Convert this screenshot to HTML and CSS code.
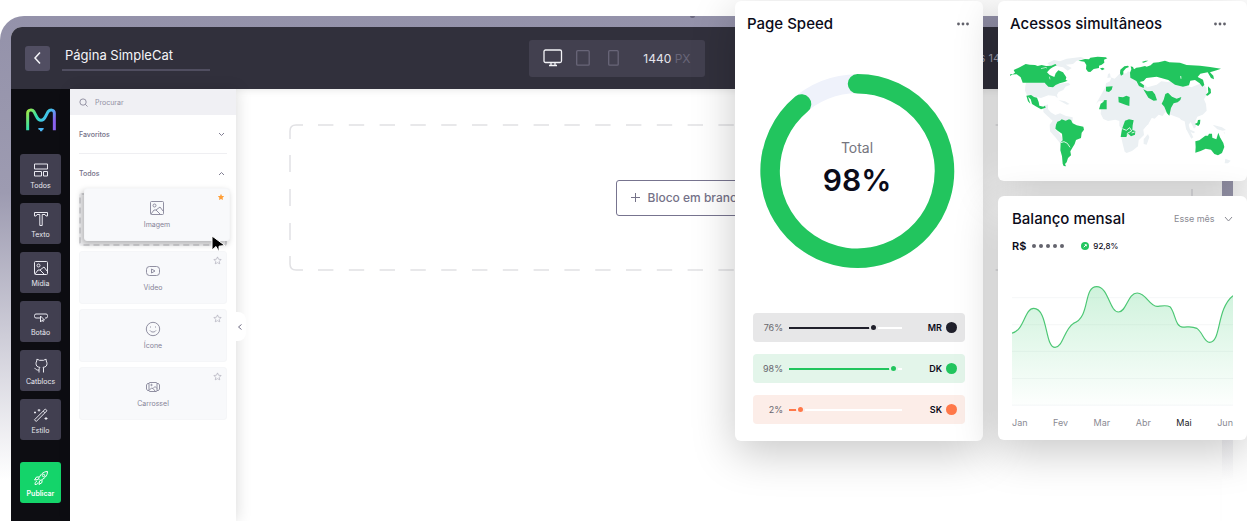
FILE: index.html
```html
<!DOCTYPE html>
<html lang="pt-BR">
<head>
<meta charset="utf-8">
<title>Página SimpleCat</title>
<link rel="stylesheet" href="styles.css">
</head>
<body>
<main class="stage">
  <div class="device">
    <span class="camera"></span>
    <div class="screen">
      <header class="topbar">
        <div class="page-name">
          <button class="back" aria-label="Voltar"><svg width="10" height="14" viewBox="0 0 10 14"><path d="M7 1.500 2 7l5 5.500"/></svg></button>
          <input class="title-input" aria-label="Nome da página" value="Página SimpleCat">
        </div>
        <div class="viewport">
          <button class="mode mode-on" aria-label="Desktop"><svg width="20" height="18" viewBox="0 0 20 18"><rect x="1" y="1" width="17.500" height="12.500" rx="1.500"/><path d="M8 13.500v3M12 13.500v3M6 16.500h8"/></svg></button>
          <button class="mode" aria-label="Tablet"><svg width="14" height="16" viewBox="0 0 14 16"><rect x=".7" y=".7" width="12.500" height="14.500" rx="1"/></svg></button>
          <button class="mode" aria-label="Celular"><svg width="11" height="16" viewBox="0 0 11 16"><rect x=".7" y=".7" width="9.500" height="14.500" rx="1"/></svg></button>
          <span class="px-size">1440 <span class="unit">PX</span></span>
        </div>
        <span class="saved">às 14</span>
      </header>
      <div class="workspace">
        <nav class="rail">
          <svg class="logo" width="32" height="24" viewBox="0 0 96 72">
            <defs><linearGradient id="brand" x1="0" y1="0" x2="1" y2=".5"><stop offset="0" stop-color="#a0ea48"/><stop offset=".4" stop-color="#2fe0b0"/><stop offset=".7" stop-color="#45bff0"/><stop offset="1" stop-color="#8a62ee"/></linearGradient></defs>
            <path d="M8 67V16C8 4 22 4 27 11C35 24 36 37 48 37S61 24 69 11C75 4 88 4 88 16V67" fill="none" stroke="url(#brand)" stroke-width="9"/>
            <path d="M40 60h16v3q-1 3-4 3v4h-7v-4q-5 0-5-3z" fill="#4bb5f3"/>
          </svg>
          <div class="tools">
            <button class="tool"><svg viewBox="0 0 16 16"><path d="M1.500 2h13v5h-13zM1.500 9.500h7V14h-7zM10.500 9.500h4V14h-4z"/></svg>Todos</button>
            <button class="tool"><svg viewBox="0 0 16 16"><path d="M1.500 1.500h13v3.500h-1.500L12 3.500H9.200v11H6.800v-11H4L3 5H1.500z"/></svg>Texto</button>
            <button class="tool"><svg viewBox="0 0 16 16"><rect x="1.500" y="1.500" width="13" height="13" rx="1"/><circle cx="5.500" cy="5.500" r="1.500"/><path d="m2 14 3-4h2l4-3 3 4M7 10l4 4"/></svg>Mídia</button>
            <button class="tool"><svg viewBox="0 0 16 16"><path d="M7 9H3Q1.500 9 1.500 7.500v-1Q1.500 5 3 5h10q1.500 0 1.500 1.500v1Q14.500 9 13 9h-1M7.500 7l4 4H9.500l.8 2M7.500 7v6l2-2"/></svg>Botão</button>
            <button class="tool"><svg viewBox="0 0 16 16"><path d="M6 14.500V12c-3 .7-3-1.500-4.500-1.700M10.500 14.500V11c0-1 0-1.200-.5-1.600 3-.3 4-1.700 4-4 0-1-.4-1.700-.8-2.400V1.300c-1 0-1.700.4-2.500 1H6.300c-.8-.6-1.500-1-2.500-1V3C3.300 3.700 3 4.400 3 5.400c0 2.300 1 3.700 4 4-.6.5-.8 1-1 2.600"/></svg>Catblocs</button>
            <button class="tool"><svg viewBox="0 0 16 16"><path d="M1.500 12.800 12.300 2l1.700 1.700L3.200 14.500zM10.200 4.100l1.700 1.700M6 2v2.500M4.700 3.200h2.600M2 4.500v2M1 5.500h2M13 10v3M11.500 11.500h3"/></svg>Estilo</button>
          </div>
          <button class="tool publish"><svg viewBox="0 0 16 16"><path d="M5.500 9C7 5 10 1.500 14.500 1.500 14.500 6 11 9 7 10.500zM6 7H3.500L1.500 10l3.500-.5M9 10v2.500l-3 2 .5-3.700M4 11c-1.500.5-2 2-2 3.500 1.500 0 3-.5 3-2"/><circle cx="10.500" cy="5.500" r="1.200"/></svg>Publicar</button>
        </nav>
        <aside class="panel">
          <label class="search"><svg width="9" height="9" viewBox="0 0 10 10"><circle cx="4.500" cy="4.500" r="3.500"/><path d="m7 7 2.500 2.500"/></svg><input type="search" placeholder="Procurar" aria-label="Procurar"></label>
          <button class="section section-line">Favoritos<svg width="7" height="5" viewBox="0 0 7 5"><path d="m1 1 2.500 2.500L6 1"/></svg></button>
          <button class="section">Todos<svg width="7" height="5" viewBox="0 0 7 5"><path d="M1 4 3.500 1.500 6 4"/></svg></button>
          <div class="tiles">
            <div class="slot">
              <button class="tile lifted"><svg class="star star-on" viewBox="0 0 10 10"><path d="m5 1 1.200 2.600 2.800.3L7 5.900l.5 2.800L5 7.400 2.500 8.700 3 5.900l-2-2 2.800-.3z"/></svg><svg class="glyph" viewBox="0 0 16 16"><rect x="1.500" y="1.500" width="13" height="13" rx="1"/><circle cx="5.500" cy="5.500" r="1.500"/><path d="m2 14 3-4h2l4-3 3 4M7 10l4 4"/></svg>Imagem</button>
              <svg class="pointer" width="17" height="20" viewBox="0 0 17 20"><path d="M2 2v14l4-3.500L9 18l0-5.800 6-.7z"/></svg>
            </div>
            <button class="tile"><svg class="star" viewBox="0 0 10 10"><path d="m5 1 1.200 2.600 2.800.3L7 5.900l.5 2.800L5 7.400 2.500 8.700 3 5.900l-2-2 2.800-.3z"/></svg><svg class="glyph" viewBox="0 0 16 16"><rect x="1.500" y="3.500" width="13" height="9" rx="3"/><path d="m6.500 6 3.500 2-3.500 2z"/></svg>Vídeo</button>
            <button class="tile"><svg class="star" viewBox="0 0 10 10"><path d="m5 1 1.200 2.600 2.800.3L7 5.900l.5 2.800L5 7.400 2.500 8.700 3 5.900l-2-2 2.800-.3z"/></svg><svg class="glyph" viewBox="0 0 16 16"><circle cx="8" cy="8" r="6.700"/><path d="M5 9.500c1.500 2 4.500 2 6 0M5.500 5.500v1M10.500 5.500v1"/></svg>Ícone</button>
            <button class="tile"><svg class="star" viewBox="0 0 10 10"><path d="m5 1 1.200 2.600 2.800.3L7 5.900l.5 2.800L5 7.400 2.500 8.700 3 5.900l-2-2 2.800-.3z"/></svg><svg class="glyph" viewBox="0 0 16 16"><rect x="4" y="3.500" width="8" height="9" rx="1"/><path d="M4 4.500H2.500L1.500 6v4l1 1.500H4M12 4.500h1.500l1 1.500v4l-1 1.500H12M4.500 11l2-2 1.500.5L10 7.500l2 2M8 9.500l2.500 3"/><circle cx="6.500" cy="6" r=".7"/></svg>Carrossel</button>
          </div>
          <button class="collapse" aria-label="Recolher painel"><svg width="6" height="8" viewBox="0 0 6 8"><path d="M4.500 1.500 1.500 4l3 2.500"/></svg></button>
        </aside>
        <section class="canvas">
          <div class="dropzone">
            <svg class="dashes">
              <line class="dash-h" x1="29" y1="1" x2="97%" y2="1"/>
              <line class="dash-h dash-bottom" x1="29" y1="1" x2="97%" y2="1"/>
              <line class="dash-v" x1="1" y1="31" x2="1" y2="119"/>
              <line class="dash-v dash-right" x1="0" y1="31" x2="0" y2="119"/>
              <path d="M14 1H7Q1 1 1 7v8M1 132v8q0 6 6 6h7"/>
            </svg>
            <button class="blank"><svg width="9" height="9" viewBox="0 0 9 9"><path d="M4.500 0v9M0 4.500h9"/></svg>Bloco em branco</button>
          </div>
        </section>
      </div>
    </div>
  </div>

  <div class="cards">
    <article class="card speed">
      <header class="card-head"><h2>Page Speed</h2><button class="more" aria-label="Mais"><svg width="12" height="4" viewBox="0 0 12 4"><circle cx="1.500" cy="2" r="1.400"/><circle cx="6" cy="2" r="1.400"/><circle cx="10.500" cy="2" r="1.400"/></svg></button></header>
      <div class="gauge">
        <svg viewBox="0 0 196 196"><circle cx="98" cy="98" r="87.200" fill="none" stroke="#eff2fb" stroke-width="19"/><path d="M98.500 10.800A87.200 87.200 0 1 1 42.500 31" fill="none" stroke="#22c55e" stroke-width="19.500" stroke-linecap="round"/></svg>
        <div class="gauge-text"><span class="gauge-label">Total</span><strong>98%</strong></div>
      </div>
      <ul class="stats">
        <li class="stat dark"><label for="mr">76%</label><input id="mr" type="range" value="77" style="--v:76%"><b>MR</b><i></i></li>
        <li class="stat green"><label for="dk">98%</label><input id="dk" type="range" value="96" style="--v:94%"><b>DK</b><i></i></li>
        <li class="stat orange"><label for="sk">2%</label><input id="sk" type="range" value="7" style="--v:7%"><b>SK</b><i></i></li>
      </ul>
    </article>
    <div class="side">
      <article class="card access">
        <header class="card-head"><h2>Acessos simultâneos</h2><button class="more" aria-label="Mais"><svg width="12" height="4" viewBox="0 0 12 4"><circle cx="1.500" cy="2" r="1.400"/><circle cx="6" cy="2" r="1.400"/><circle cx="10.500" cy="2" r="1.400"/></svg></button></header>
        <svg class="map" viewBox="60 165 669 341">
          <g fill="#ebf0f3">
            <path d="M110 243h75l14 10 36-5 6 6-15 6-6 10-14 6-5 8 2 11-8-7-20-2-22 8-20-4-22-4-6-14 1-15zM172 190l20-10 18 4 20-8 42-5 12 4-25 8-10 9-22 2 18 10-12 8-14-10-22-4-16 0zM160 318l14-5 0 14 8 10 14 8 14-5 18 8 20 4 0 12-24 2-22 10-8 10 14 14 10 16 4 16-8 2-18-22-16-18-1-20 9-12-22-20-6-6zM205 300l20 4 14 8-8 2zM238 425l12 12-8 10-10-8z"/>
            <path d="M346 262l2-12 12-6 4-12-12 2 2-12 6-2 2 12 12 4 14-14 22-2 4-6 10 4 12 12 4 20 24 4 8 8 28-8 14-10 18 2 24-4 20 12 28 8 24-10 14 4 8 8 0 20-8 14 6 14 2 20-12 12-16 6-6 14 2 16-6 6-10-20-6 8 6 22 8 16-6 4-16-30-4-22-10-4-6-6-26-10-16-8-8 12-12-4-12 12-20-6-20-16-12 0 4 10 12 16 16 4 2 8-22 16-12 4-24-40-6-22-12-2-4 8-8-4 2-12-14-2-10-12-10 0 2 12-12-14-20 0-8 8z"/>
            <path d="M346 276l38-4 6 12 22 2 6 4 22 2 10 14 12 24 10 10 20 1-14 26-18 22 2 16-16 16-2 18-18 14-16 6-6-4-6-24-6-26 4-16-8-12 0-14-12-4-22 4-14-6-8-16 2-26zM474 402l4 10-8 22-9-2 0-14zM590 384l26 12-6 4-20-10zM668 374l28 8 12 8-10 2-16-4zM706 476l16 6-8 8-10 0zM700 395l6 4-2 2z"/>
          </g>
          <g fill="#22c55e">
            <path d="M61 227l14-9-4-8 18-8 18-10 12 2 16 1 8 3 12-3 13 3 16-1 12-5 4 4-12 6-8 5-9 10 8 8 14 6 4-11 8-9 14 6 10 15-2 8 6 2-10 4-14 4-12 5-8 7-14-2-8-8-3-4h-66l-6-16-12-9-14-1-14 4z"/>
            <path d="M265 182l20-5 12 1 4-5 22-3 24 2 5 3-10 4 1 9-8 6-8 3 0 7-16 3-10 9-7-1-6-8 1-12-6-10zM330 205l9-2 5 4-8 4z"/>
            <path d="M109 287l14-2 9 6 9 2 5 13 2 11 12 3 5-3 2 6-14 5-16-9-11-7-4-14-8-8 7 21-7-7z"/>
            <path d="M202 365l8-3 5-4 12 4 10-4 6 2 5 10 12 6 20 4 2 9-7 9-2 16-15 6-4 12-5 8-8 14 2 12-9 8-4 13-5 5 3 7-7-1-3-7-2-22-5-18 1-24 6-6-2-20-12-8-8-7 2-12z"/>
            <path d="M420 218l4-10-2-9 7 2 3 7 7-5 11-1 15-4 5 2 12-4 8-8 16-1 19-5 13 5 32 1 20 7 40 2 30 4 33 5-13 5-20 6 10 10 2 11-9-4-10-17-22 4-8 10 16 8 4 16-6 5-8-10-14-10-14 2-4 14-18 4-24-6-20-14-35-10-31 4-8 9-12 3 13 10-1 8-14-6-8-15-18-10z"/>
            <path d="M390 220l1-11 12-10 11-2 3 4-9 4-8 9 0 9-7 4zM455 186l12-4 8 0-14 6z"/>
            <path d="M348 260l20-1-3 10-8 7-9-2zM332 311l8-5 2-5 8-1 0 28-23 0zM385 290l14 2 10-5 10 4-1 27-10-3-22-8zM405 362l12-4 14 3-3 15-1 14 9 3-1 11-12 5-8-8-6 10-17 0 4-24zM460 268l12 6 15-1 8 10 6 18-10 1-16-9zM526 282l8-4 12 12 14 6 14-5-3 9-8 7-12 3-8 14-5 23-7-7-8-20-8-9 6-12zM614 372l8-4 2-8 7-1-1 12-5 7zM654 259l8 8 1 12-10 8-6-2 8-8-1-9z"/>
            <path d="M616 424l12-3 18-14 8 0 3-6 9 0 1 12 12 5 6-20 5 14 10 17 3 12-7 18-12 7-11-4-10-13-16-3-15 7-16 5 1-17z"/>
          </g>
          <path d="M212 428l10-3 10 5 8 12M397 386l12 5 10-8 6 10-13 7 0 12M425 399l9-3M572 228l1 8" fill="none" stroke="#fff" stroke-width="2.500"/>
          <path d="M153 206l12-3M178 230l2 8M165 202l6 2" fill="none" stroke="#c5efd4" stroke-width="2.500"/>
        </svg>
      </article>
      <article class="card balance">
        <header class="card-head"><h2>Balanço mensal</h2><label class="period"><select aria-label="Período"><option>Esse mês</option></select><svg width="9" height="6" viewBox="0 0 9 6"><path d="m1 1 3.500 4L8 1"/></svg></label></header>
        <div class="amount"><b>R$</b><span class="mask"><i></i><i></i><i></i><i></i><i></i></span><svg width="8" height="8" viewBox="0 0 8 8"><circle cx="4" cy="4" r="4" fill="#22c55e"/><path d="M2.700 5.300 5.200 2.800M3.700 2.700h1.600v1.600" fill="none" stroke="#fff"/></svg><span>92,8%</span></div>
        <svg class="chart" viewBox="68 308 662 366">
          <defs><linearGradient id="area" x1="0" y1="0" x2="0" y2="1"><stop offset="0" stop-color="#22c55e" stop-opacity=".22"/><stop offset="1" stop-color="#22c55e" stop-opacity=".01"/></linearGradient></defs>
          <path d="M68 349H730M68 430H730M68 510H730M68 591H730M68 671H730" stroke="#f0f1f3" stroke-width="2"/>
          <path d="M68 455C105 448 105 381 133 381C176 381 166 498 197 498C220 498 225 442 252 426C304 408 280 316 322 316C357 316 360 392 387 392C411 392 415 335 443 335C470 335 480 376 503 375C522 373 532 371 541 376C558 394 556 437 580 437C597 437 605 433 622 441C640 454 643 482 660 483C695 483 680 382 730 343V671H68z" fill="url(#area)"/>
          <path d="M68 455C105 448 105 381 133 381C176 381 166 498 197 498C220 498 225 442 252 426C304 408 280 316 322 316C357 316 360 392 387 392C411 392 415 335 443 335C470 335 480 376 503 375C522 373 532 371 541 376C558 394 556 437 580 437C597 437 605 433 622 441C640 454 643 482 660 483C695 483 680 382 730 343" fill="none" stroke="#4cc774" stroke-width="3.500"/>
        </svg>
        <div class="months"><span>Jan</span><span>Fev</span><span>Mar</span><span>Abr</span><span class="now">Mai</span><span>Jun</span></div>
      </article>
    </div>
  </div>
</main>
</body>
</html>
```
FILE: styles.css
```css
* { box-sizing: border-box; }
body { margin: 0; overflow: hidden; background: #fff; font-family: Inter, "Noto Sans", sans-serif; }
button, input, select { font: inherit; color: inherit; border: 0; padding: 0; margin: 0; background: none; outline: 0; }
svg { display: block; flex: none; }
button svg, label svg { fill: none; stroke: currentColor; }
h2, ul { margin: 0; padding: 0; }

.stage { position: relative; min-height: 100vh; padding: 16px 14px 0 0; }

/* Device */
.device { position: relative; min-height: calc(100vh - 16px); display: flex; padding: 11px 11px 0; border-radius: 24px 24px 0 0; background: linear-gradient(#9492aa 0, #9d9bb1 35%, #fff 92%); }
.camera { position: absolute; top: 0; left: 56%; width: 5px; height: 2px; border-radius: 0 0 3px 3px; background: #6b6980; }
.screen { flex: 1; display: flex; flex-direction: column; border-radius: 11px 11px 0 0; overflow: hidden; background: #fff; }

.topbar { display: grid; grid-template-columns: 1fr auto 1fr; align-items: center; height: 62px; padding: 0 14px; background: #31303c; color: #f4f4f8; }
.page-name { display: flex; align-items: center; gap: 12px; }
.back { width: 25px; height: 25px; border-radius: 3px; background: #514e62; display: grid; place-items: center; }
.back svg { stroke-width: 1.5; }
.title-input { width: 148px; height: 26px; padding: 0 3px 4px; border-bottom: 2px solid #504e60; font-size: 13px; }
.viewport { display: flex; align-items: center; height: 37px; width: 176px; padding: 0 14px; border-radius: 3px; background: #42404f; }
.mode { color: #686578; margin-right: 18px; }
.mode-on { color: #f4f4f8; margin-right: 13px; }
.mode svg { stroke-width: 1.3; }
.px-size { margin-left: auto; font-size: 12px; color: #e4e4ec; white-space: nowrap; }
.unit { color: #686578; }
.saved { justify-self: end; padding-right: 208px; font-size: 11px; color: #a3a1b0; }

.workspace { flex: 1; display: flex; }
.rail { width: 59px; padding: 19px 9px 16px; display: flex; flex-direction: column; align-items: center; background: #0d0d12; }
.tools { display: flex; flex-direction: column; gap: 8px; margin: 22px 0; }
.tool { width: 41px; height: 41px; border-radius: 3px; background: #413f50; color: #e9e9f0; font-size: 7px; line-height: 9px; display: flex; flex-direction: column; align-items: center; justify-content: center; gap: 3px; padding-top: 3px; }
.tool svg { width: 16px; height: 16px; stroke-width: 1; }
.publish { background: #14d46a; color: #fff; font-weight: 600; }

/* Block panel */
.panel { position: relative; z-index: 1; width: 166px; background: #fff; box-shadow: 2px 0 14px rgba(0, 0, 0, .12); font-size: 8px; color: #737087; }
.search { display: flex; align-items: center; gap: 7px; height: 26px; padding: 0 9px; background: #f0f0f4; }
.search svg { opacity: .8; }
.search input { width: 100px; font-size: 7px; }
.search input::placeholder { color: #918fa3; opacity: 1; }
.section { display: flex; align-items: center; justify-content: space-between; width: 148px; height: 39px; margin: 0 9px; padding: 0 2px 0 0; font-size: 7px; font-weight: 500; }
.section-line { border-bottom: 1px solid #efeff2; }
.section svg { stroke-width: .9; }
.tiles { display: flex; flex-direction: column; gap: 5px; padding: 0 9px; }
.slot { position: relative; height: 53px; border: 2px dashed #d3d3d6; border-radius: 3px; background: #f2f2f4; }
.tile { position: relative; height: 53px; width: 100%; background: #f8f9fb; border: 1px solid #f5f6f8; border-radius: 3px; display: flex; flex-direction: column; align-items: center; justify-content: center; gap: 3px; font-size: 7px; line-height: 11px; color: #858397; }
.lifted { position: absolute; left: 3px; top: -7px; width: 146px; box-shadow: -2px 3px 6px rgba(0, 0, 0, .26); }
.glyph { width: 16px; height: 16px; stroke-width: .9; }
.star { position: absolute; top: 4px; right: 4px; width: 9px; height: 9px; stroke: #a9a8b5; stroke-width: .7; }
.star-on { width: 8px; height: 8px; fill: #ff9f38; stroke: none; }
.pointer { position: absolute; left: 129px; top: 39px; fill: #000; stroke: #fff; stroke-width: 1; }
.collapse { position: absolute; right: -10px; top: 223px; width: 12px; height: 29px; border-radius: 0 8px 8px 0; background: #fff; display: grid; place-items: center; }

/* Canvas */
.canvas { flex: 1; padding: 35px 30px 0 53px; box-shadow: inset 0 6px 8px -6px rgba(0, 0, 0, .12); }
.dropzone { position: relative; height: 147px; display: grid; place-items: center; }
.dashes { position: absolute; inset: 0; width: 100%; height: 100%; overflow: visible; fill: none; stroke: #e1e1e4; stroke-width: 1.5; }
.dash-h { stroke-dasharray: 15.4 15.4; }
.dash-v { stroke-dasharray: 17 17; }
.dash-bottom { transform: translateY(145px); }
.dash-right { transform: translateX(100%); }
.blank { position: relative; display: flex; align-items: center; gap: 8px; width: 250px; height: 36px; padding: 0 14px; border: 1px solid #77748f; border-radius: 3px; font-size: 12px; font-weight: 500; color: #757288; }

/* Floating cards */
.cards { position: absolute; top: 1px; right: 0; display: flex; gap: 15px; color: #0b0b19; }
.side { display: flex; flex-direction: column; gap: 15px; width: 249px; }
.cards::before { content: ""; position: absolute; inset: 0; z-index: -1; border-radius: 6px; }
.card { border-radius: 6px; background: #fff; box-shadow: 0 12px 44px rgba(0, 0, 0, .22); }
.card-head { display: flex; align-items: center; justify-content: space-between; height: 46px; }
.card h2 { font-size: 15px; font-weight: 500; line-height: 20px; }
.more svg { fill: #62626b; stroke: none; }
.speed { width: 248px; padding: 0 14px 17px 12px; }
.gauge { display: grid; place-items: center; padding: 26px 2px 0 0; }
.gauge svg, .gauge-text { grid-area: 1 / 1; }
.gauge svg { width: 196px; }
.gauge-text { display: flex; flex-direction: column; align-items: center; padding-bottom: 4px; }
.gauge-label { font-size: 14px; line-height: 22px; color: #75757e; }
.gauge strong { font-size: 30px; line-height: 42px; font-weight: 600; }
.stats { display: flex; flex-direction: column; gap: 12px; list-style: none; margin: 44px 4px 0 6px; }
.stat { display: flex; align-items: center; height: 29px; padding: 0 8px 0 10px; border-radius: 4px; background: var(--bg); font-size: 9px; }
.stat label { width: 20px; text-align: right; color: #67676e; white-space: nowrap; }
.stat input { appearance: none; width: 113px; height: 9px; margin-left: 6px; background: linear-gradient(var(--fg), var(--fg)) 0 50% / var(--v) 2px no-repeat, linear-gradient(#fff, #fff) 0 50% / 100% 2px no-repeat; }
.stat input::-webkit-slider-thumb { appearance: none; width: 9px; height: 9px; border-radius: 50%; background: var(--fg); border: 2px solid var(--bg); box-sizing: border-box; }
.stat b { margin-left: auto; font-weight: 600; }
.stat i { width: 11px; height: 11px; margin-left: 4px; border-radius: 50%; background: var(--fg); }
.dark { --bg: #e7e7e8; --fg: #20202b; }
.green { --bg: #e3f5ea; --fg: #22c55e; }
.orange { --bg: #fcede8; --fg: #ff7849; }

.access { position: relative; padding: 0 14px 12px 12px; }
.access .card-head { width: 216px; }
.map { width: 223px; }
.access .map { margin-top: 8px; }

.balance { position: relative; padding: 0 14px 10px; }
.period { display: flex; align-items: center; gap: 9px; font-size: 9px; color: #8a8a93; }
.period select { appearance: none; }
.amount { display: flex; align-items: center; height: 8px; font-size: 8px; font-weight: 500; }
.amount b { font-size: 11px; font-weight: 600; }
.mask { display: flex; gap: 3px; margin: 0 17px 0 6px; }
.mask i { width: 4px; height: 4px; border-radius: 50%; background: #64646d; }
.amount svg { margin-right: 4px; }
.chart { width: 100%; margin-top: 34px; }
.months { display: flex; justify-content: space-between; margin-top: 10px; font-size: 9px; line-height: 14px; color: #8a8a93; }
.now { color: #1a1a26; }
```
